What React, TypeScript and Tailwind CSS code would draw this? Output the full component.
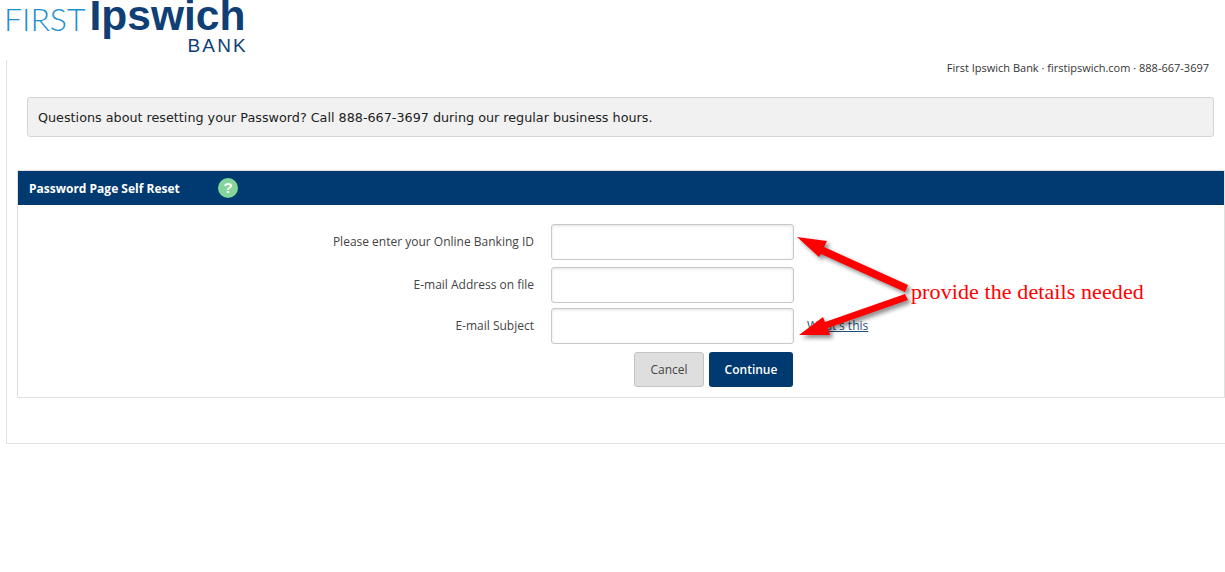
// App.tsx - password self reset page
import React from 'react'

const fields = [
  { label: 'Please enter your Online Banking ID', rowClass: 'mb-[7px]' },
  { label: 'E-mail Address on file', rowClass: 'mb-[5px]' },
  { label: 'E-mail Subject', rowClass: 'mb-[8px]' },
]

function Logo() {
  return (
    <div className="h-[60px] overflow-hidden pl-[4px] font-['Liberation_Sans',sans-serif]">
      <div className="-mt-[3px] flex h-[37px] items-baseline">
        <span className="translate-y-px text-[32px] leading-[37px] font-light text-[#1b8fd0] font-['Lato',sans-serif]">
          FIRST
        </span>
        <span className="ml-[4px] text-[42.5px] leading-[37px] font-bold text-[#0f3f75]">
          Ipswich
        </span>
      </div>
      <div className="w-[244px] pt-[3px] text-right text-[19px] leading-[18px] tracking-[2.2px] text-[#0f3f75]">
        BANK
      </div>
    </div>
  )
}

function Arrows() {
  return (
    <svg className="absolute left-[790px] top-[230px]" width="130" height="120" viewBox="790 230 130 120" fill="none">
      <g fill="#ff0000" className="drop-shadow-[3px_3px_2px_rgba(0,0,0,0.45)]">
        <path d="M908 285 L824 247 L827 241 L797 237 L819 257 L821 254 L905 292 Z" />
        <path d="M905 294 L825 322 L823 317 L799 335 L830 335 L828 328 L908 300 Z" />
      </g>
    </svg>
  )
}

export default function App() {
  return (
    <div className="relative h-[572px] w-[1225px] overflow-hidden bg-white font-['Open_Sans',sans-serif]">
      <Logo />

      <main className="ml-[6px] h-[384px] border-b border-l border-[#e3e3e3]">
        <p className="pr-[16px] pb-[1px] text-right text-[11px] leading-[15px] text-[#333]">
          First Ipswich Bank · firstipswich.com · 888-667-3697
        </p>

        {/* Notice */}
        <div className="mt-[21px] ml-[20px] flex h-[40px] w-[1187px] items-center rounded-[3px] border border-[#d4d4d4] bg-[#f1f1f1] pt-[1px] pl-[10px] font-['DejaVu_Sans',sans-serif] text-[12.75px] text-[#222]">
          Questions about resetting your Password? Call 888-667-3697 during our regular business hours.
        </div>

        {/* Form panel */}
        <section className="mt-[33px] ml-[10px] h-[228px] w-[1208px] border border-[#e0e0e0]">
          <header className="flex h-[34px] items-center bg-[#003a70] pl-[11px]">
            <h1 className="w-[189px] pt-[1px] text-[12px] font-bold text-white">Password Page Self Reset</h1>
            <span className="flex h-5 w-5 items-center justify-center rounded-full bg-[#82d69a] font-['Liberation_Sans',sans-serif] text-[15px] font-bold text-white">
              ?
            </span>
          </header>

          <form className="pt-[19px]">
            {fields.map((field, index) => (
              <div key={field.label} className={`flex items-center ${field.rowClass}`}>
                <label className="w-[516px] text-right text-[12px] text-[#444]">{field.label}</label>
                <input
                  type="text"
                  className="ml-[17px] h-[36px] w-[243px] rounded-[3px] border border-[#c8c8c8] bg-white shadow-[inset_0_1px_3px_rgba(0,0,0,0.12)]"
                />
                {index === 2 && (
                  <a href="#" className="ml-[13px] text-[12px] text-[#1d4f7c] underline">
                    What's this
                  </a>
                )}
              </div>
            ))}
            <div className="ml-[616px] flex gap-[5px]">
              <button type="button" className="h-[35px] w-[70px] rounded-[3px] border border-[#c4c4c4] bg-[#dedede] text-[12px] text-[#444]">
                Cancel
              </button>
              <button type="button" className="h-[35px] w-[84px] rounded-[3px] bg-[#003a70] text-[12px] font-semibold text-white">
                Continue
              </button>
            </div>
          </form>
        </section>
      </main>

      {/* Annotation pasted over the page */}
      <Arrows />
      <span className="absolute left-[911px] top-[279px] font-['Liberation_Serif',serif] text-[22px] leading-[26px] tracking-[0.1px] whitespace-nowrap text-[#ff0000]">
        provide the details needed
      </span>
    </div>
  )
}
